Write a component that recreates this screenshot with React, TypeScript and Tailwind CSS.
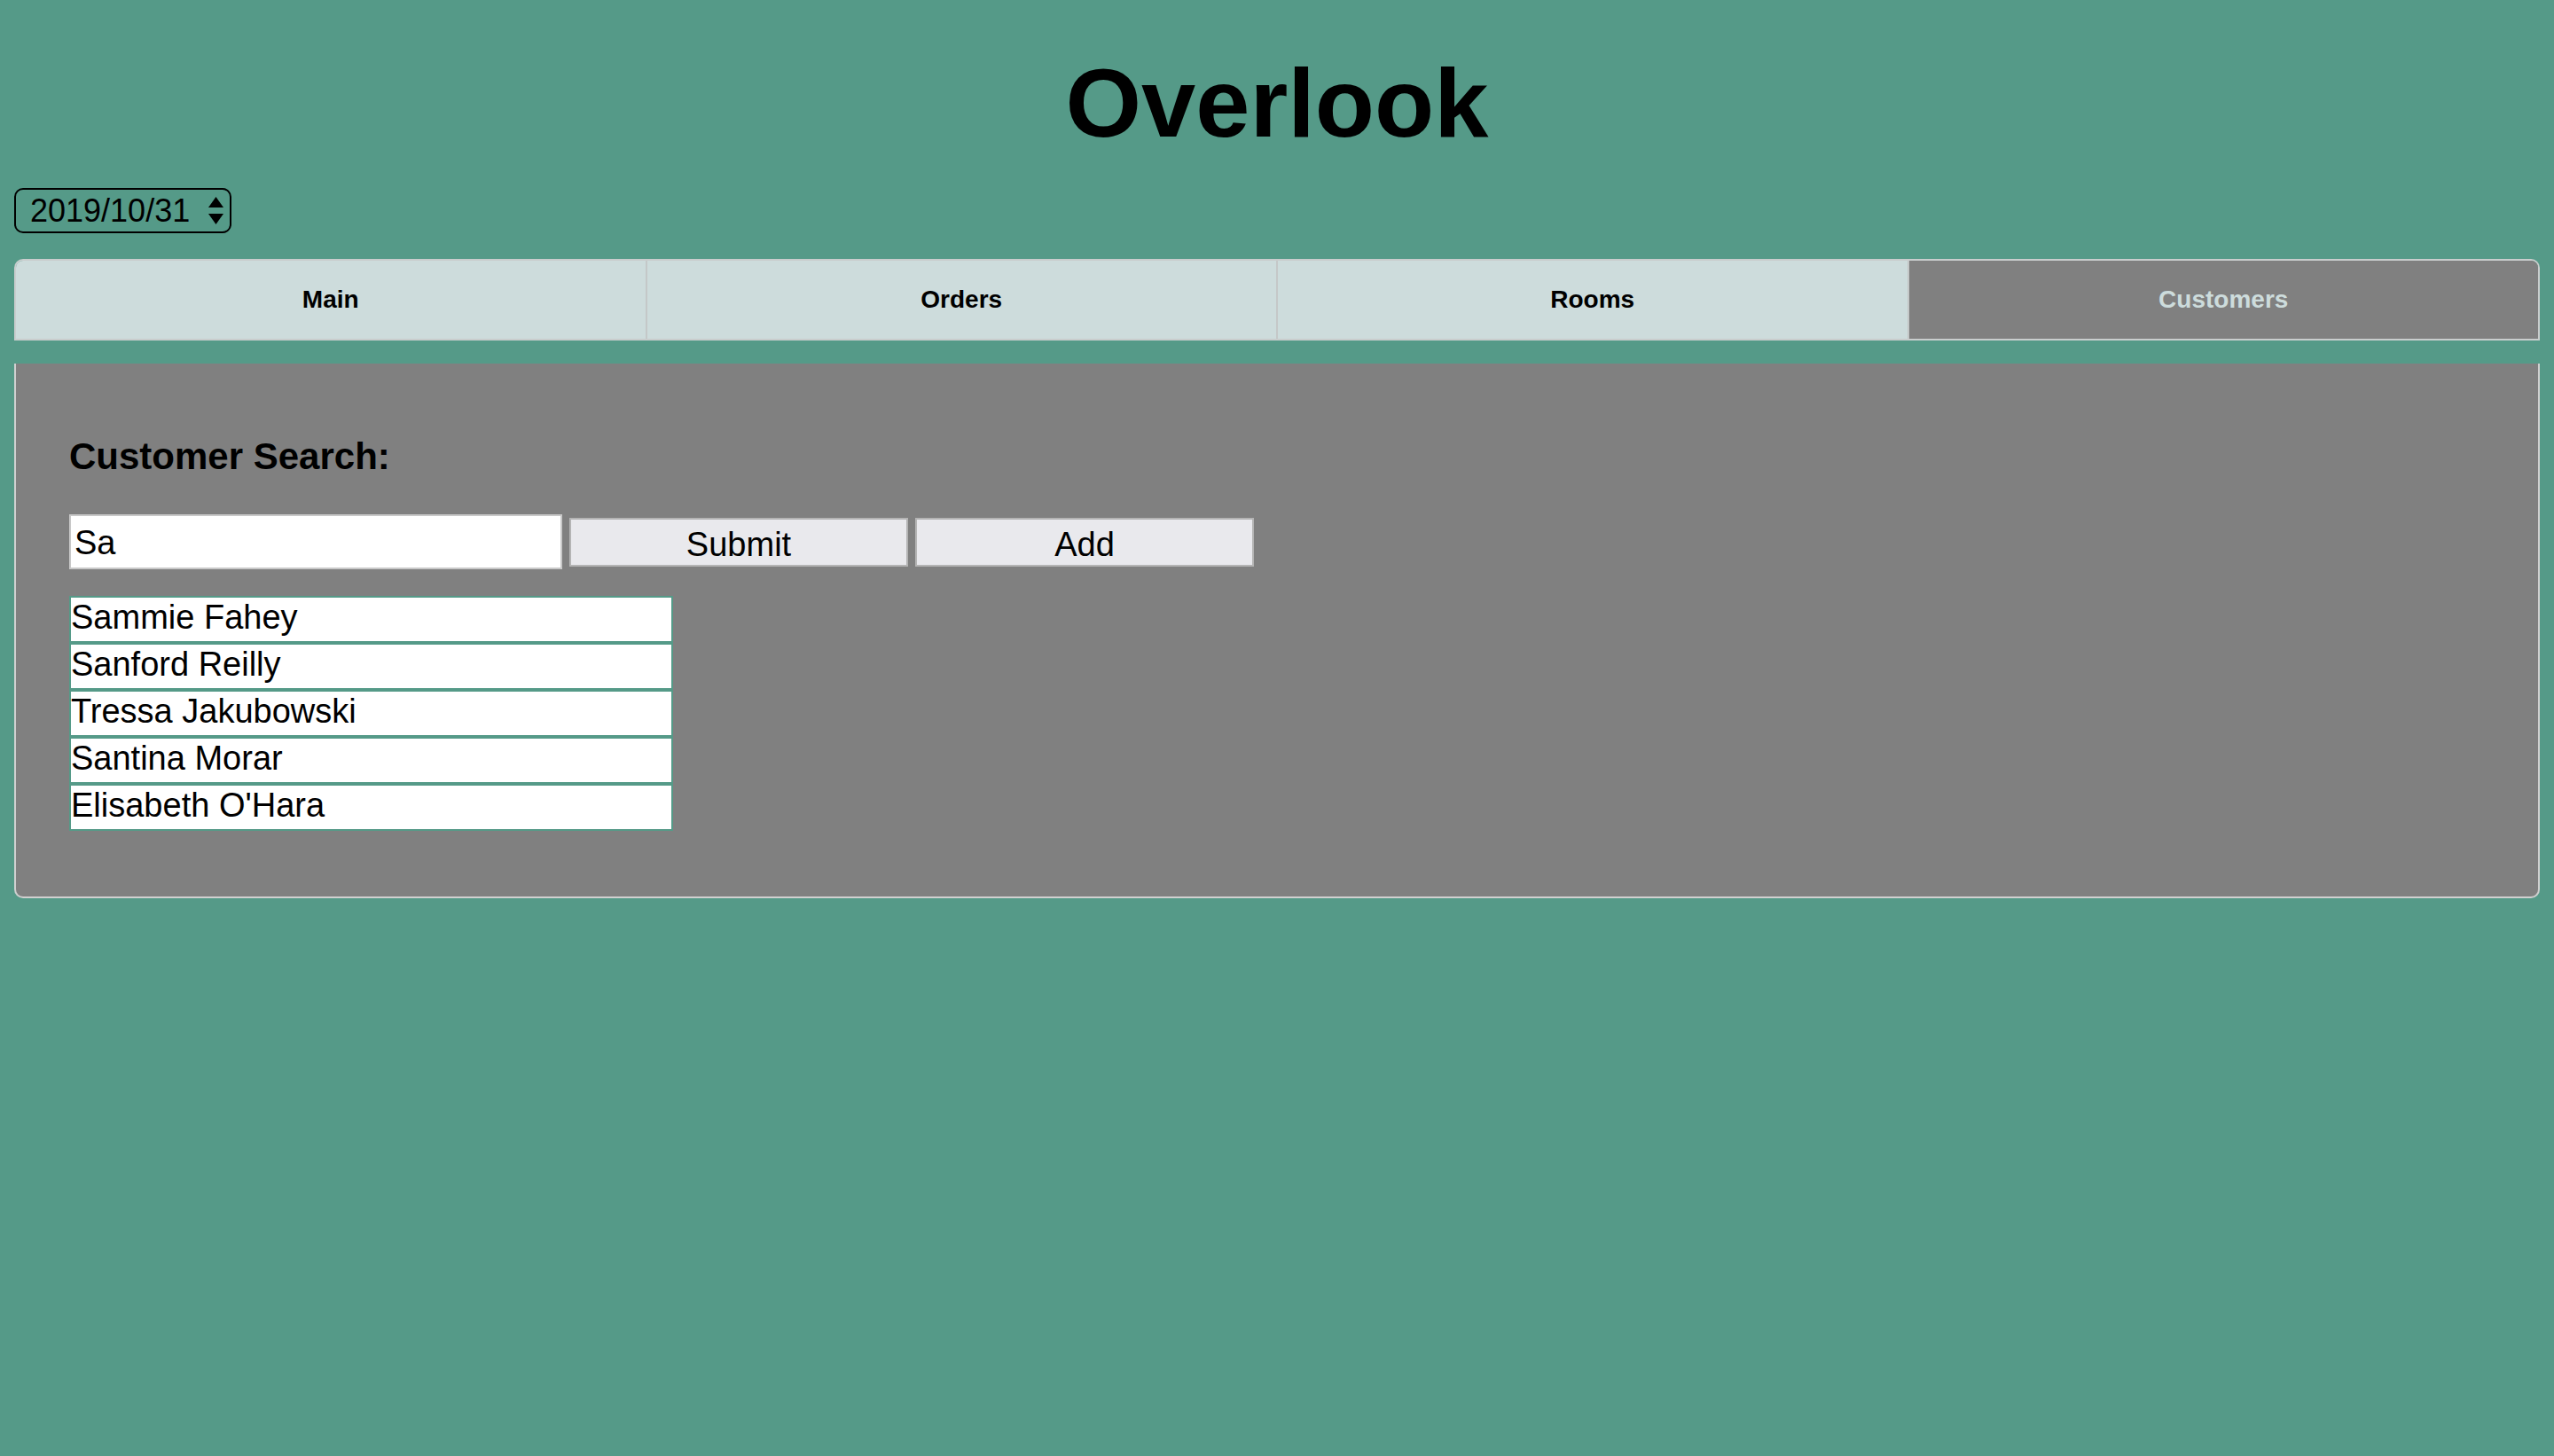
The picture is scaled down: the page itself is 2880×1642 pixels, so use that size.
import React from "react";

const tabs = ["Main", "Orders", "Rooms", "Customers"];
const customers = [
  "Sammie Fahey",
  "Sanford Reilly",
  "Tressa Jakubowski",
  "Santina Morar",
  "Elisabeth O'Hara",
];

export default function App() {
  return (
    <div className="min-h-screen bg-[#559a88] px-[16px] font-['Liberation_Sans',Arial,sans-serif] text-black">
      <h1 className="pt-[53px] text-center text-[110px] font-bold leading-[126px]">
        Overlook
      </h1>

      <div className="mt-[33px] flex h-[51px] w-[245px] items-center rounded-[10px] border-2 border-black pl-[16px] pr-[7px]">
        <span className="text-[36px] leading-[42px]">2019/10/31</span>
        <svg
          className="ml-auto"
          width="17"
          height="31"
          viewBox="0 0 17 31"
          aria-hidden="true"
        >
          <polygon points="8.5,0 17,12 0,12" fill="#000" />
          <polygon points="0,19 17,19 8.5,31" fill="#000" />
        </svg>
      </div>

      <div className="mt-[29px] flex h-[92px] divide-x-2 divide-[#c4c8c8] overflow-hidden rounded-t-[10px] border-2 border-[#c9cdcd]">
        {tabs.map((t) => {
          const active = t === "Customers";
          return (
            <button
              key={t}
              className={
                active
                  ? "flex flex-1 items-center justify-center bg-[#808080] text-[28px] font-bold text-[#cddcdc]"
                  : "flex flex-1 items-center justify-center bg-[#cddcdc] text-[28px] font-bold text-black"
              }
            >
              {t}
            </button>
          );
        })}
      </div>

      <div className="mt-[26px] rounded-b-[10px] border-2 border-t-0 border-[#d0d0d0] bg-[#808080] pb-[74px] pl-[60px] pt-[81px]">
        <h2 className="text-[42px] font-bold leading-[48px]">Customer Search:</h2>

        <div className="mt-[41px] flex items-center gap-[8px]">
          <input
            defaultValue="Sa"
            className="h-[62px] w-[556px] border-2 border-[#c8c8c8] bg-white pl-[4px] pt-[3px] text-[38px] text-black outline-none"
          />
          <button className="h-[55px] w-[382px] border-2 border-[#b4b4b4] bg-[#e9e9ed] text-[38px] text-black">
            Submit
          </button>
          <button className="h-[55px] w-[382px] border-2 border-[#b4b4b4] bg-[#e9e9ed] text-[38px] text-black">
            Add
          </button>
        </div>

        <ul className="mt-[30px] w-[681px]">
          {customers.map((c) => (
            <li
              key={c}
              className="h-[53px] border-2 border-[#559a88] bg-white pb-[4px] text-[38px] leading-[45px]"
            >
              {c}
            </li>
          ))}
        </ul>
      </div>
    </div>
  );
}
